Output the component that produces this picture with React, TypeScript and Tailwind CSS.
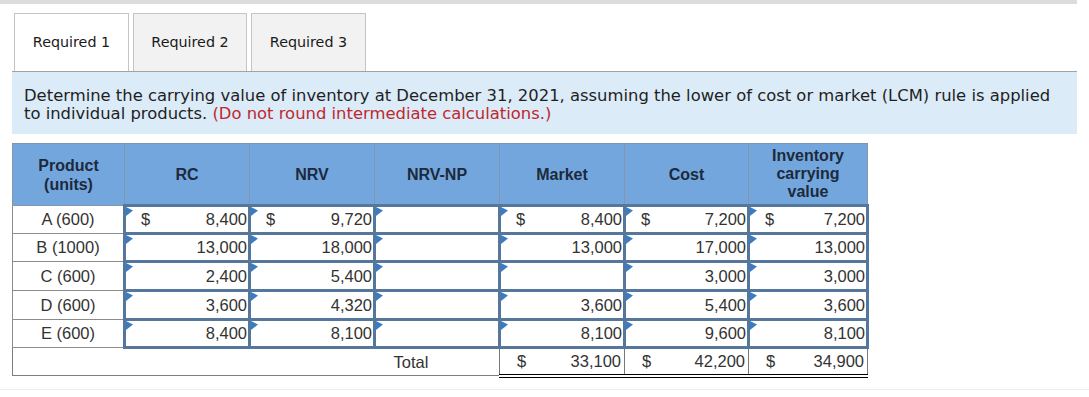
import React from "react";

type Cell = { v?: string; dollar?: boolean; input?: boolean };

const ROWS: { product: string; h: string; cells: Cell[] }[] = [
  {
    product: "A (600)",
    h: "h-[28px]",
    cells: [
      { v: "8,400", dollar: true, input: true },
      { v: "9,720", dollar: true, input: true },
      { input: true },
      { v: "8,400", dollar: true, input: true },
      { v: "7,200", dollar: true, input: true },
      { v: "7,200", dollar: true, input: true },
    ],
  },
  {
    product: "B (1000)",
    h: "h-[28px]",
    cells: [
      { v: "13,000", input: true },
      { v: "18,000", input: true },
      { input: true },
      { v: "13,000", input: true },
      { v: "17,000", input: true },
      { v: "13,000", input: true },
    ],
  },
  {
    product: "C (600)",
    h: "h-[29px]",
    cells: [
      { v: "2,400", input: true },
      { v: "5,400", input: true },
      { input: true },
      { input: true },
      { v: "3,000", input: true },
      { v: "3,000", input: true },
    ],
  },
  {
    product: "D (600)",
    h: "h-[29px]",
    cells: [
      { v: "3,600", input: true },
      { v: "4,320", input: true },
      { input: true },
      { v: "3,600", input: true },
      { v: "5,400", input: true },
      { v: "3,600", input: true },
    ],
  },
  {
    product: "E (600)",
    h: "h-[28px]",
    cells: [
      { v: "8,400", input: true },
      { v: "8,100", input: true },
      { input: true },
      { v: "8,100", input: true },
      { v: "9,600", input: true },
      { v: "8,100", input: true },
    ],
  },
];

const HEADERS = ["RC", "NRV", "NRV-NP", "Market", "Cost"];

function Flag() {
  return (
    <svg width="7" height="9" viewBox="0 0 7 9" className="absolute left-0 top-0">
      <polygon points="0,0 7,3.5 0,9" fill="#3b7bc4" />
    </svg>
  );
}

function InputCell({ c }: { c: Cell }) {
  return (
    <td className="relative border-[3px] border-[#56779c] bg-white p-0 align-middle">
      <Flag />
      <div className="flex items-center justify-between pl-[15px] pr-[1px] text-[16.5px] text-[#333]">
        <span>{c.dollar ? "$" : ""}</span>
        <span>{c.v ?? ""}</span>
      </div>
    </td>
  );
}

function TotalCell({ v }: { v: string }) {
  return (
    <td className="border-l border-t-2 border-b-[4px] border-double border-l-[#777] border-t-[#23364f] border-b-black bg-white p-0 align-middle">
      <div className="flex items-center justify-between pl-[17px] pr-[3px] text-[16.5px] text-[#333]">
        <span>$</span>
        <span>{v}</span>
      </div>
    </td>
  );
}

export default function App() {
  return (
    <div className="w-[1089px] h-[397px] bg-white overflow-hidden" style={{ fontFamily: "'DejaVu Sans', Verdana, sans-serif" }}>
      {/* top strip */}
      <div className="h-[4px] w-[1077px] bg-[#dcdcdc]" />

      {/* tabs */}
      <div className="ml-[14px] mt-[9px] flex gap-[4px]">
        <div className="flex h-[58px] w-[115px] items-center justify-center border border-b-0 border-[#c4c4c4] bg-white text-[14.3px] text-[#1a1a1a]">
          Required 1
        </div>
        <div className="flex h-[58px] w-[114px] items-center justify-center border border-b-0 border-[#c4c4c4] bg-[#f2f2f2] text-[14.3px] text-[#1a1a1a]">
          Required 2
        </div>
        <div className="flex h-[58px] w-[115px] items-center justify-center border border-b-0 border-[#c4c4c4] bg-[#f2f2f2] text-[14.3px] text-[#1a1a1a]">
          Required 3
        </div>
      </div>

      {/* instructions */}
      <div className="ml-[12px] h-[63px] w-[1065px] border-t border-[#a3a3a3] bg-[#dcebf8] px-[12px] pt-[15px] text-[16.4px] leading-[18px] text-[#1f1f1f]">
        <div className="whitespace-nowrap">
          Determine the carrying value of inventory at December 31, 2021, assuming the lower of cost or market (LCM) rule is applied
        </div>
        <div className="whitespace-nowrap">
          to individual products. <span className="text-[#c0272d]">(Do not round intermediate calculations.)</span>
        </div>
      </div>

      {/* table */}
      <table
        className="ml-[12px] mt-[9px] border-collapse border border-[#7d7d7d] table-fixed"
        style={{ fontFamily: "'Liberation Sans', Arial, sans-serif" }}
      >
        <colgroup>
          <col className="w-[112px]" />
          <col className="w-[125px]" />
          <col className="w-[125px]" />
          <col className="w-[125px]" />
          <col className="w-[125px]" />
          <col className="w-[124px]" />
          <col className="w-[119px]" />
        </colgroup>
        <thead>
          <tr className="h-[62px] bg-[#74a6de] text-[16px] font-bold leading-[19px] text-[#1c2a3c]">
            <th className="border border-[#8296ad] font-bold">
              Product
              <br />
              (units)
            </th>
            {HEADERS.map((h) => (
              <th key={h} className="border border-[#8296ad] font-bold">
                {h}
              </th>
            ))}
            <th className="border border-[#8296ad] font-bold leading-[18px]">
              Inventory
              <br />
              carrying
              <br />
              value
            </th>
          </tr>
        </thead>
        <tbody>
          {ROWS.map((r) => (
            <tr key={r.product} className={r.h}>
              <td className="border border-[#8c8c8c] bg-white text-center text-[16.5px] text-[#333]">{r.product}</td>
              {r.cells.map((c, i) => (
                <InputCell key={i} c={c} />
              ))}
            </tr>
          ))}
          <tr className="h-[28px]">
            <td colSpan={3} className="bg-white" />
            <td className="bg-white pl-[19px] text-[16.5px] text-[#333]">Total</td>
            <TotalCell v="33,100" />
            <TotalCell v="42,200" />
            <TotalCell v="34,900" />
          </tr>
        </tbody>
      </table>

      {/* bottom rule */}
      <div className="mt-[11px] h-px w-full bg-[#ececec]" />
    </div>
  );
}
